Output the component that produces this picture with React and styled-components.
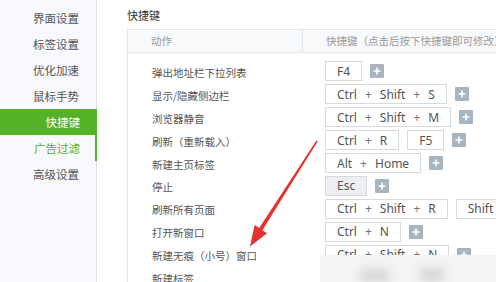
import React from 'react';
import styled, { createGlobalStyle } from 'styled-components';

const GlobalStyle = createGlobalStyle`
  html, body {
    margin: 0;
    padding: 0;
    background: #fff;
  }
  body {
    font-family: "Noto Sans", "Noto Sans CJK SC", sans-serif;
  }
`;

const GREEN = '#55b125';

const Page = styled.div`
  position: relative;
  display: flex;
  width: 496px;
  height: 282px;
  overflow: hidden;
  background: #fff;
`;

const Sidebar = styled.nav`
  flex: 0 0 97px;
  background: #f7f9fc;
  border-right: 1px solid #dfe2e6;
  padding-top: 5px;
  box-sizing: border-box;
`;

const NavItem = styled.div`
  height: 26px;
  line-height: 26px;
  text-align: right;
  padding-right: 17px;
  font-family: "Noto Sans CJK SC", sans-serif;
  font-size: 11.5px;
  color: ${(p) => (p.$active ? '#fff' : p.$hover ? GREEN : '#555')};
  background: ${(p) => (p.$active ? GREEN : 'transparent')};
  box-shadow: ${(p) => (p.$hover ? `inset -2px 0 0 ${GREEN}` : 'none')};
  margin-right: ${(p) => (p.$active || p.$hover ? '-1px' : '0')};
`;

const Main = styled.main`
  flex: 1;
  padding-left: 30px;
  min-width: 0;
`;

const Title = styled.div`
  height: 29px;
  line-height: 30px;
  font-family: "Noto Sans CJK SC", sans-serif;
  font-size: 11px;
  color: #333;
`;

const Table = styled.div`
  width: 440px;
  border: 1px solid #e3e6ea;
  border-right: none;
  border-bottom: none;
  min-height: 260px;
`;

const HeaderRow = styled.div`
  display: grid;
  grid-template-columns: 174px 1fr;
  height: 22px;
  background: #f8f9fb;
  border-bottom: 1px solid #e6e8eb;
`;

const HeaderCell = styled.div`
  padding-left: 23px;
  line-height: 22px;
  font-family: "Noto Sans CJK SC", sans-serif;
  font-size: 10.5px;
  color: #9a9a9a;
  white-space: nowrap;
  border-left: ${(p) => (p.$divider ? '1px solid #e3e6ea' : 'none')};
`;

const Body = styled.div`
  padding-top: 7px;
`;

const Row = styled.div`
  display: grid;
  grid-template-columns: 173px 1fr;
  height: 22.9px;
  align-items: center;
`;

const Action = styled.div`
  padding-left: 24px;
  font-family: "Noto Sans CJK SC", sans-serif;
  font-size: 10.5px;
  color: #555;
  white-space: nowrap;
  padding-top: 2px;
`;

const Keys = styled.div`
  display: flex;
  align-items: center;
  gap: 8px;
  padding-left: 24px;
`;

const KeyBox = styled.div`
  display: flex;
  align-items: center;
  gap: 8px;
  height: 18px;
  padding: 0 11px;
  border: 1px solid #d6d9de;
  background: ${(p) => (p.$pressed ? '#eceef1' : '#fff')};
  font-size: 12px;
  color: #555;
  white-space: nowrap;
  flex-shrink: 0;
`;

const Plus = styled.span`
  color: #777;
`;

const AddButton = styled.div`
  width: 14px;
  height: 14px;
  background: #a9b4c1;
  border-radius: 1px;
  display: flex;
  align-items: center;
  justify-content: center;
  flex-shrink: 0;
`;

const Arrow = styled.svg`
  position: absolute;
  left: 0;
  top: 0;
  pointer-events: none;
`;

const Smudge = styled.div`
  position: absolute;
  left: 320px;
  top: 255px;
  width: 176px;
  height: 27px;
  background: #f4f4f4;
  overflow: hidden;
`;

const Blob = styled.div`
  position: absolute;
  background: #d9d9d9;
  filter: blur(4px);
  border-radius: 4px;
`;

const nav = ['界面设置', '标签设置', '优化加速', '鼠标手势', '快捷键', '广告过滤', '高级设置'];

const rows = [
  { action: '弹出地址栏下拉列表', keys: [['F4']] },
  { action: '显示/隐藏侧边栏', keys: [['Ctrl', 'Shift', 'S']] },
  { action: '浏览器静音', keys: [['Ctrl', 'Shift', 'M']] },
  { action: '刷新（重新载入）', keys: [['Ctrl', 'R'], ['F5']] },
  { action: '新建主页标签', keys: [['Alt', 'Home']] },
  { action: '停止', keys: [['Esc']], pressed: true },
  { action: '刷新所有页面', keys: [['Ctrl', 'Shift', 'R'], ['Shift', 'F5']], noAdd: true },
  { action: '打开新窗口', keys: [['Ctrl', 'N']] },
  { action: '新建无痕（小号）窗口', keys: [['Ctrl', 'Shift', 'N']] },
  { action: '新建标签', keys: [['Ctrl', 'T']] },
];

const AddIcon = () => (
  <AddButton>
    <svg width="8" height="8" viewBox="0 0 8 8">
      <path d="M4 0.5v7M0.5 4h7" stroke="#fff" strokeWidth="1.6" />
    </svg>
  </AddButton>
);

const Combo = ({ parts, pressed }) => (
  <KeyBox $pressed={pressed}>
    {parts.map((k, i) => (
      <React.Fragment key={i}>
        {i > 0 && <Plus>+</Plus>}
        <span>{k}</span>
      </React.Fragment>
    ))}
  </KeyBox>
);

export default function App() {
  return (
    <Page>
      <GlobalStyle />
      <Sidebar>
        {nav.map((n, i) => (
          <NavItem key={n} $active={i === 4} $hover={i === 5}>
            {n}
          </NavItem>
        ))}
      </Sidebar>
      <Main>
        <Title>快捷键</Title>
        <Table>
          <HeaderRow>
            <HeaderCell>动作</HeaderCell>
            <HeaderCell $divider>快捷键（点击后按下快捷键即可修改）</HeaderCell>
          </HeaderRow>
          <Body>
            {rows.map((r) => (
              <Row key={r.action}>
                <Action>{r.action}</Action>
                <Keys>
                  {r.keys.map((parts, i) => (
                    <Combo key={i} parts={parts} pressed={r.pressed} />
                  ))}
                  {!r.noAdd && <AddIcon />}
                </Keys>
              </Row>
            ))}
          </Body>
        </Table>
      </Main>
      <Arrow width="496" height="282" viewBox="0 0 496 282">
        <polygon
          points="316.4,140.5 317.6,141.4 262.4,230.2 267,233.2 250,246.5 254.6,225 259.2,228.1"
          fill="#e5312d"
        />
      </Arrow>
      <Smudge>
        <Blob style={{ left: 40, top: 14, width: 30, height: 14 }} />
        <Blob style={{ left: 100, top: 12, width: 24, height: 16 }} />
      </Smudge>
    </Page>
  );
}
